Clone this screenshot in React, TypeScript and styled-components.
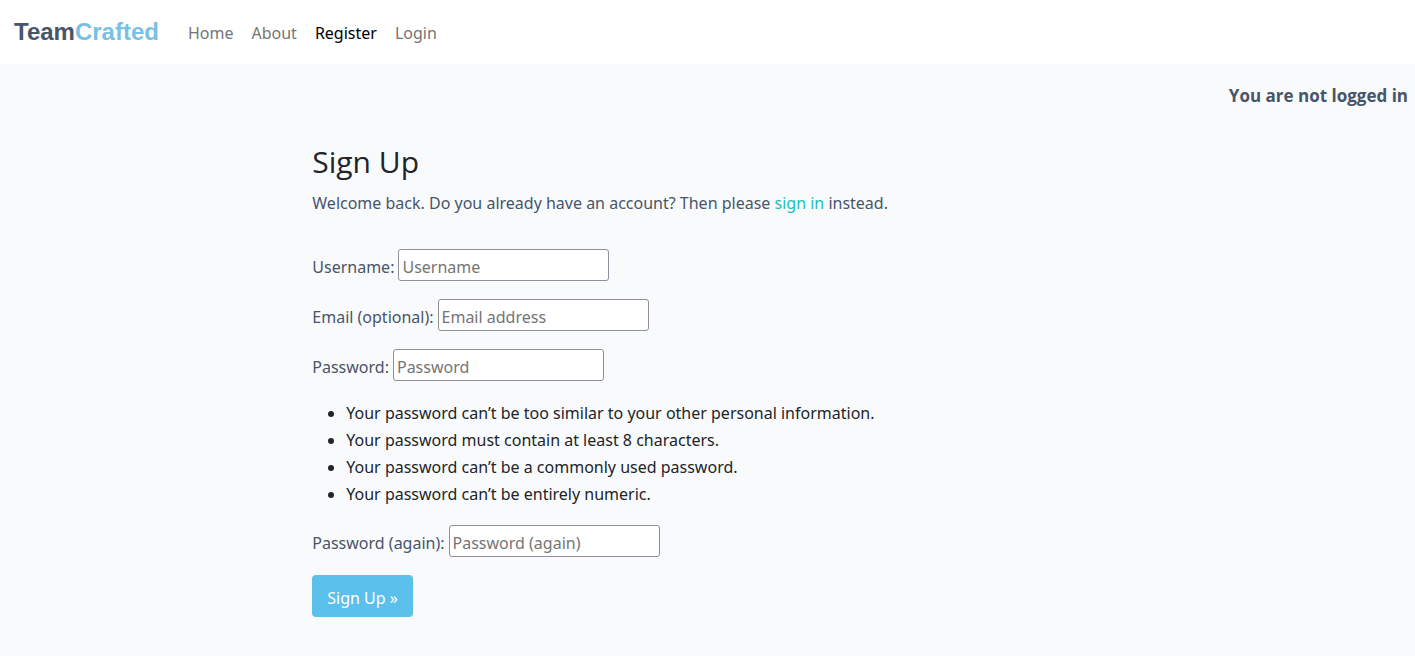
import React from "react";
import styled, { createGlobalStyle } from "styled-components";

const GlobalStyle = createGlobalStyle`
  *, *::before, *::after { box-sizing: border-box; }
  body {
    margin: 0;
    background: #f9fafc;
    color: #212529;
    font-family: "Noto Sans", "Open Sans", sans-serif;
    font-size: 16px;
    line-height: 27px;
  }
`;

const Navbar = styled.nav`
  display: flex;
  align-items: center;
  height: 64px;
  padding: 0 14px;
  background: #fff;
`;

const Brand = styled.a`
  margin-right: 20px;
  padding-bottom: 2px;
  color: #475569;
  font-family: "Liberation Sans", Arial, sans-serif;
  font-size: 24px;
  font-weight: 700;
  text-decoration: none;
`;

const BrandAccent = styled.span`
  color: #7ac0e2;
`;

const NavList = styled.ul`
  display: flex;
  margin: 0;
  padding: 2px 0 0;
  list-style: none;
`;

const NavLink = styled.a<{ $active?: boolean }>`
  display: block;
  padding: 0 9px;
  color: ${({ $active }) => ($active ? "#000" : "#757575")};
  text-decoration: none;
`;

const Status = styled.p`
  margin: 0;
  padding: 18px 7px 0;
  color: #475569;
  font-family: "Open Sans", sans-serif;
  font-size: 17px;
  font-weight: 700;
  text-align: right;
`;

const Main = styled.main`
  width: 56%;
  margin: 0 auto;
  padding: 34px 1px 0;
`;

const Title = styled.h1`
  margin: 0 0 9px;
  font-family: "Open Sans", sans-serif;
  font-size: 30px;
  font-weight: 400;
  line-height: 38px;
`;

const Intro = styled.p`
  margin: 0 0 32px;
  color: #475569;
`;

const TextLink = styled.a`
  color: #20c0b8;
  text-decoration: none;
`;

const Field = styled.div`
  display: flex;
  align-items: center;
  gap: 4px;
  margin-bottom: 18px;
  color: #475569;
`;

const Label = styled.label`
  padding-top: 4px;
  line-height: 28px;
`;

const Input = styled.input`
  width: 211px;
  height: 32px;
  padding: 4px 3px 0;
  border: 1px solid #8f8f9d;
  border-radius: 3px;
  background: #fff;
  color: #212529;
  font: inherit;

  &::placeholder {
    color: #757575;
    opacity: 1;
  }
`;

const Hints = styled.ul`
  margin: 0 0 17px;
  padding: 1px 0 0 34px;
`;

const SubmitButton = styled.button`
  height: 42px;
  padding: 4px 15px 0;
  border: 0;
  border-radius: 4px;
  background: #5bc0eb;
  color: #fff;
  font: inherit;
  cursor: pointer;
`;

const navItems = ["Home", "About", "Register", "Login"];

const hints = [
  "Your password can’t be too similar to your other personal information.",
  "Your password must contain at least 8 characters.",
  "Your password can’t be a commonly used password.",
  "Your password can’t be entirely numeric.",
];

type TextFieldProps = {
  id: string;
  label: string;
  placeholder: string;
  type?: string;
};

function TextField({ id, label, placeholder, type = "text" }: TextFieldProps) {
  return (
    <Field>
      <Label htmlFor={id}>{label}</Label>
      <Input id={id} name={id} type={type} placeholder={placeholder} />
    </Field>
  );
}

export default function App() {
  return (
    <>
      <GlobalStyle />
      <Navbar>
        <Brand href="#home">
          Team<BrandAccent>Crafted</BrandAccent>
        </Brand>
        <NavList>
          {navItems.map((item) => (
            <li key={item}>
              <NavLink href={`#${item.toLowerCase()}`} $active={item === "Register"}>
                {item}
              </NavLink>
            </li>
          ))}
        </NavList>
      </Navbar>
      <Status>You are not logged in</Status>
      <Main>
        <Title>Sign Up</Title>
        <Intro>
          Welcome back. Do you already have an account? Then please{" "}
          <TextLink href="#login">sign in</TextLink> instead.
        </Intro>
        <form>
          <TextField id="username" label="Username:" placeholder="Username" />
          <TextField id="email" label="Email (optional):" placeholder="Email address" type="email" />
          <TextField id="password1" label="Password:" placeholder="Password" type="password" />
          <Hints>
            {hints.map((hint) => (
              <li key={hint}>{hint}</li>
            ))}
          </Hints>
          <TextField id="password2" label="Password (again):" placeholder="Password (again)" type="password" />
          <SubmitButton type="submit">Sign Up »</SubmitButton>
        </form>
      </Main>
    </>
  );
}
